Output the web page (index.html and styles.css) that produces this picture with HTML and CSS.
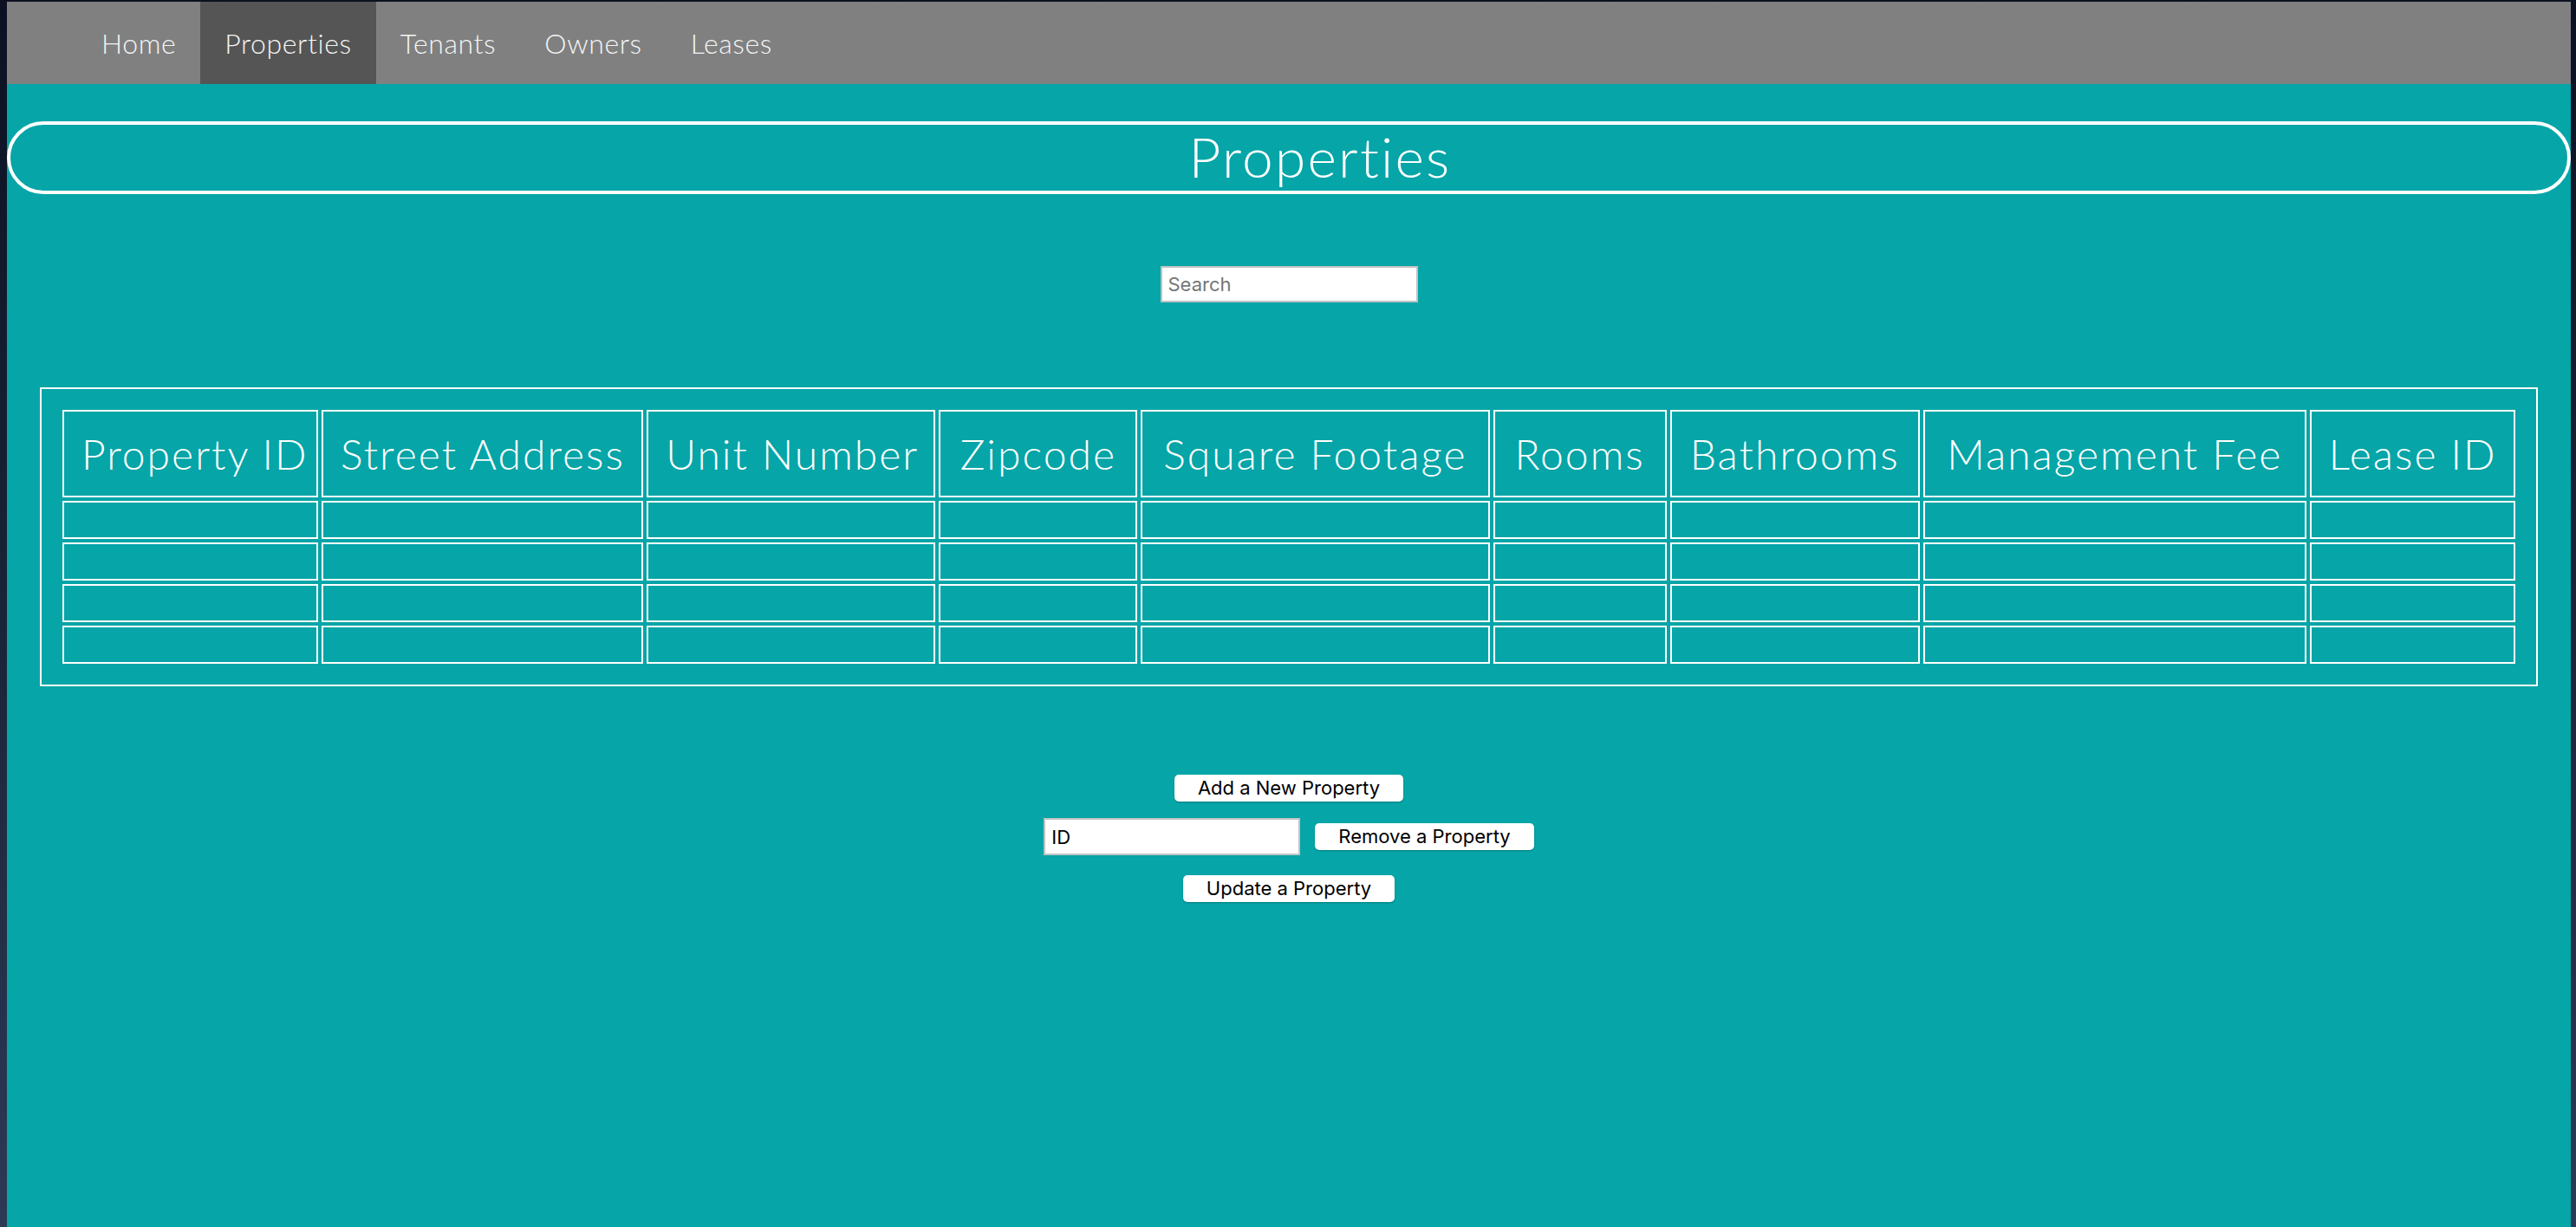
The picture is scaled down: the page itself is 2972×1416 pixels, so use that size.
FILE: index.html
```html
<!DOCTYPE html>
<html lang="en">
<head>
<meta charset="utf-8">
<title>Properties</title>
<link rel="stylesheet" href="styles.css">
</head>
<body>
<div class="screen">
  <nav class="topnav">
    <ul class="nav-list">
      <li class="nav-item"><a href="#">Home</a></li>
      <li class="nav-item active"><a href="#">Properties</a></li>
      <li class="nav-item"><a href="#">Tenants</a></li>
      <li class="nav-item"><a href="#">Owners</a></li>
      <li class="nav-item"><a href="#">Leases</a></li>
    </ul>
  </nav>

  <h1 class="page-title">Properties</h1>

  <div class="search-row">
    <input class="field" type="text" placeholder="Search">
  </div>

  <div class="table-box">
    <table class="data-table">
      <colgroup>
        <col class="c1"><col class="c2"><col class="c3"><col class="c4"><col class="c5"><col class="c6"><col class="c7"><col class="c8"><col class="c9">
      </colgroup>
      <thead>
        <tr>
          <th>Property ID</th>
          <th>Street Address</th>
          <th>Unit Number</th>
          <th>Zipcode</th>
          <th>Square Footage</th>
          <th>Rooms</th>
          <th>Bathrooms</th>
          <th>Management Fee</th>
          <th>Lease ID</th>
        </tr>
      </thead>
      <tbody>
        <tr><td></td><td></td><td></td><td></td><td></td><td></td><td></td><td></td><td></td></tr>
        <tr><td></td><td></td><td></td><td></td><td></td><td></td><td></td><td></td><td></td></tr>
        <tr><td></td><td></td><td></td><td></td><td></td><td></td><td></td><td></td><td></td></tr>
        <tr><td></td><td></td><td></td><td></td><td></td><td></td><td></td><td></td><td></td></tr>
      </tbody>
    </table>
  </div>

  <div class="actions">
    <button class="btn" type="button">Add a New Property</button>
    <div class="remove-row">
      <input class="field field-id" type="text" value="ID">
      <button class="btn" type="button">Remove a Property</button>
    </div>
    <button class="btn btn-update" type="button">Update a Property</button>
  </div>
</div>
</body>
</html>
```

FILE: styles.css
```css
html, body {
  margin: 0;
  padding: 0;
}

body {
  background: linear-gradient(180deg, #0b1122 0%, #1a2438 50%, #2d3a56 100%);
  min-height: 1416px;
}

.screen {
  margin: 2px 6px 0 8px;
  min-height: 1414px;
  background: #05a5a8;
  font-family: "Lato", "Open Sans", sans-serif;
  color: #ffffff;
  overflow: hidden;
}

/* Navigation */
.topnav {
  background: #808080;
  height: 95px;
}

.nav-list {
  list-style: none;
  margin: 0;
  padding: 0 0 0 81px;
  display: flex;
  height: 95px;
}

.nav-item a {
  display: block;
  padding: 0 28px;
  line-height: 95px;
  font-size: 32px;
  font-weight: 300;
  letter-spacing: 0.6px;
  color: #f4f4f4;
  text-decoration: none;
}

.nav-item.active a {
  background: #555555;
}

/* Title */
.page-title {
  margin: 43px 0 0;
  height: 76px;
  padding-left: 72px;
  line-height: 74px;
  border: 4px solid #ffffff;
  border-radius: 60px;
  text-align: center;
  font-size: 64px;
  font-weight: 300;
  letter-spacing: 2.2px;
  color: #ffffff;
}

/* Search */
.search-row {
  display: flex;
  justify-content: center;
  margin-top: 83px;
}

.field {
  box-sizing: border-box;
  width: 297px;
  height: 42px;
  margin: 0;
  padding: 0 0 0 7px;
  border: 2px solid #c2c2c2;
  background: #ffffff;
  font-family: "Inter", "Liberation Sans", sans-serif;
  font-size: 22px;
  color: #000000;
  outline: none;
}

.field::placeholder {
  color: #767676;
}

/* Table */
.table-box {
  margin: 98px 38px 0;
  border: 2px solid #ffffff;
  padding: 20px;
}

.data-table {
  width: 100%;
  table-layout: fixed;
  border-collapse: separate;
  border-spacing: 4px;
}

.c1 { width: 295px; }
.c2 { width: 371px; }
.c3 { width: 333px; }
.c4 { width: 229px; }
.c5 { width: 402px; }
.c6 { width: 200px; }
.c7 { width: 288px; }
.c8 { width: 442px; }
.c9 { width: 237px; }

.data-table th,
.data-table td {
  border: 2px solid #ffffff;
  padding: 20px;
  height: 0;
}

.data-table th {
  font-size: 48px;
  font-weight: 300;
  line-height: 57px;
  letter-spacing: 2px;
  color: #ffffff;
  text-align: center;
  white-space: nowrap;
}

/* Actions */
.actions {
  margin-top: 102px;
  display: flex;
  flex-direction: column;
  align-items: center;
}

.btn {
  box-sizing: border-box;
  height: 31px;
  padding: 0 27px;
  margin: 0;
  border: none;
  border-radius: 5px;
  background: #ffffff;
  box-shadow: 0 1px 2px rgba(0, 0, 0, 0.25);
  font-family: "Inter", "Liberation Sans", sans-serif;
  font-size: 22px;
  line-height: 31px;
  color: #000000;
}

.remove-row {
  display: flex;
  align-items: center;
  gap: 17px;
  margin-top: 19px;
}

.field-id {
  height: 43px;
  width: 296px;
}

.btn-update {
  margin-top: 23px;
}
```
